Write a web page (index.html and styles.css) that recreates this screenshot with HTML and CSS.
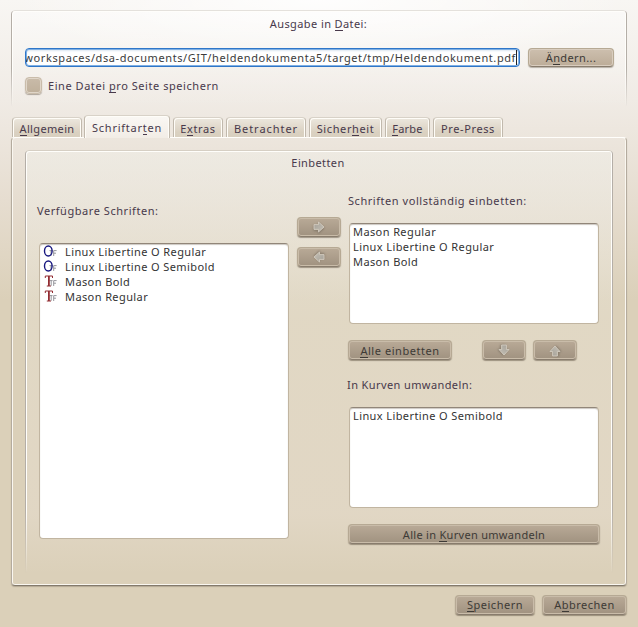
FILE: index.html
```html
<!DOCTYPE html>
<html lang="de">
<head>
<meta charset="utf-8">
<title>Ausgabe in Datei</title>
<link rel="stylesheet" href="styles.css">
</head>
<body>
<svg class="defs" width="0" height="0" aria-hidden="true">
  <linearGradient id="metal" x1="0" y1="0" x2="1" y2="1"><stop offset="0" stop-color="#a39f97"/><stop offset="1" stop-color="#c6c1b6"/></linearGradient>
  <symbol id="arrow" viewBox="0 0 12 12"><path d="M1 3.6H5.5V1L11 6L5.5 11V8.4H1Z" fill="url(#metal)" stroke="#d2ccbf" stroke-width=".9"/></symbol>
  <symbol id="otf" viewBox="0 0 14 13">
    <path d="M6.5 5.6H9.6M8 5.6V10.8M10.7 11V5.6H13.6M10.7 8.2H13" fill="none" stroke="#96969c" stroke-width="1"/>
    <ellipse cx="5.3" cy="6" rx="3.8" ry="5" fill="none" stroke="#16167f" stroke-width="1.4"/>
  </symbol>
  <symbol id="ttf" viewBox="0 0 14 13">
    <path d="M6.5 5.6H9.6M8.2 5.6V10.8M10.7 11V5.6H13.6M10.7 8.2H13" fill="none" stroke="#96969c" stroke-width="1"/>
    <path d="M2.3 3V1H9.5V3M3.8 11H8" fill="none" stroke="#922c32" stroke-width="1"/>
    <path d="M5.9 1V11" fill="none" stroke="#922c32" stroke-width="1.8"/>
  </symbol>
</svg>
<main class="dialog">
  <section class="output">
    <h2 class="heading"><span>Ausgabe in <u>D</u>atei:</span></h2>
    <div class="file-row">
      <div class="file-input"><span class="path">workspaces/dsa-documents/GIT/heldendokumenta5/target/tmp/Heldendokument.pdf</span><i class="caret"></i></div>
      <button class="btn change light"><span>Ä<u>n</u>dern...</span></button>
    </div>
    <label class="check-row"><i class="check"></i><span class="wide">Eine Datei <u>p</u>ro Seite speichern</span></label>
  </section>
  <nav class="tabs">
    <span class="tab t1"><span><u>A</u>llgemein</span></span>
    <span class="tab t2 active"><span>Schriftar<u>t</u>en</span></span>
    <span class="tab t3"><span>E<u>x</u>tras</span></span>
    <span class="tab t4"><span>Betrachter</span></span>
    <span class="tab t5"><span>Sicher<u>h</u>eit</span></span>
    <span class="tab t6"><span><u>F</u>arbe</span></span>
    <span class="tab t7"><span>Pre-Press</span></span>
  </nav>
  <section class="panel">
    <div class="embed">
      <h2 class="heading"><span>Einbetten</span></h2>
      <div class="columns">
        <div class="available">
          <div class="label"><span class="wide">Verfügbare Schriften:</span></div>
          <ul class="list tall">
            <li><svg><use href="#otf"/></svg><span>Linux Libertine O Regular</span></li>
            <li><svg><use href="#otf"/></svg><span>Linux Libertine O Semibold</span></li>
            <li><svg><use href="#ttf"/></svg><span>Mason Bold</span></li>
            <li><svg><use href="#ttf"/></svg><span>Mason Regular</span></li>
          </ul>
        </div>
        <div class="movers">
          <button class="btn arrow" aria-label="Hinzufügen"><svg><use href="#arrow"/></svg></button>
          <button class="btn arrow left" aria-label="Entfernen"><svg><use href="#arrow"/></svg></button>
        </div>
        <div class="targets">
          <div class="label"><span class="wide">Schriften vollständig einbetten:</span></div>
          <ul class="list">
            <li><span>Mason Regular</span></li>
            <li><span>Linux Libertine O Regular</span></li>
            <li><span>Mason Bold</span></li>
          </ul>
          <div class="actions">
            <button class="btn all"><span class="wide"><u>A</u>lle einbetten</span></button>
            <button class="btn arrow down" aria-label="Nach unten"><svg><use href="#arrow"/></svg></button>
            <button class="btn arrow up" aria-label="Nach oben"><svg><use href="#arrow"/></svg></button>
          </div>
          <div class="label second-label"><span>In Kurven umwandeln:</span></div>
          <ul class="list second">
            <li><span>Linux Libertine O Semibold</span></li>
          </ul>
          <button class="btn curves"><span>Alle in <u>K</u>urven umwandeln</span></button>
        </div>
      </div>
    </div>
  </section>
  <footer class="footer">
    <button class="btn save"><span><u>S</u>peichern</span></button>
    <button class="btn cancel"><span>A<u>b</u>brechen</span></button>
  </footer>
</main>
</body>
</html>
```
FILE: styles.css
```css
* { box-sizing: border-box; }
body {
  margin: 0;
  font: 11px/15px "Noto Sans", "Open Sans", sans-serif;
  letter-spacing: .4px;
  color: #48394b;
}
.defs { display: block; height: 0; }
u { text-decoration: none; border-bottom: 1px solid currentColor; display: inline-block; line-height: 12px; }
h2, ul { margin: 0; padding: 0; font: inherit; list-style: none; }
span { white-space: nowrap; }
.wide { letter-spacing: .55px; }
.dialog {
  width: 638px;
  height: 627px;
  padding: 10px 11px 0;
  overflow: hidden;
  background:
    radial-gradient(ellipse 310px 64px at 50% 0, rgba(255,255,255,.85), rgba(255,255,255,0)),
    linear-gradient(#f8f6f3 0, #f0ebe5 100px, #e6ddd0 200px, #dbd0b9 300px);
}
.output, .embed { position: relative; }
.output::before, .embed::before {
  content: "";
  position: absolute;
  inset: 0;
  border: 1px solid #b4aea7;
  border-top-color: #e4e1dc;
  border-radius: 4px;
  box-shadow: inset 1px 1px #fffefb, inset -1px 0 #fffefb;
  pointer-events: none;
}
.output {
  height: 98px;
  padding: 6px 13px 0 14px;
  background: linear-gradient(rgba(255,255,255,.45), rgba(255,255,255,0));
  border-radius: 4px;
}
.output::before { border-bottom: 0; mask-image: linear-gradient(#000 60%, transparent); }
.heading { text-align: center; height: 15px; }
.output .heading { margin-left: -2px; }
.file-row { display: flex; gap: 8px; margin-top: 17px; }
.file-input {
  display: flex;
  justify-content: flex-end;
  width: 495px;
  height: 19px;
  overflow: hidden;
  border: 1px solid #2f76c8;
  border-radius: 4px;
  background: #fff;
  box-shadow: inset 0 0 0 1px #7fb0e4, inset 0 2px 2px #dde7f1;
  color: #3b3b3b;
  padding: 1px 2px;
}
.path { letter-spacing: .59px; }
.caret { width: 1px; height: 15px; background: #222; flex: none; }
.btn {
  height: 20px;
  padding: 0;
  border: 1px solid #b6a994;
  border-bottom-color: #887c6d;
  border-radius: 4px;
  background: linear-gradient(#b9aa97, #a09280);
  box-shadow: inset 0 0 0 1px #c9bca9, 0 1px 1px rgba(90,78,62,.5);
  font: inherit;
  letter-spacing: inherit;
  color: #3d3a36;
  display: flex;
  align-items: center;
  justify-content: center;
}
.light { background: linear-gradient(#cdbfae, #bcac98); box-shadow: inset 0 0 0 1px #d9cdbf, 0 1px 1px rgba(90,78,62,.4); }
.change { width: 86px; height: 19px; }
.check-row { display: flex; align-items: center; gap: 6px; height: 17px; margin-top: 10px; }
.check {
  width: 17px;
  height: 17px;
  border: 1px solid #c9bcaa;
  border-radius: 4px;
  background: linear-gradient(#c9bba9, #bfb09b);
  box-shadow: inset 0 0 0 1px #e0d6c9, 0 1px 1px rgba(90,78,62,.45);
}
.tabs { display: flex; align-items: flex-end; height: 29px; padding-left: 1px; }
.tab {
  height: 20px;
  border: 1px solid #c1b9ad;
  border-top-color: #d8d2c8;
  border-bottom: 0;
  border-radius: 4px 4px 0 0;
  background: linear-gradient(#ece7de, #dad1c1 75%, #d9d0c0);
  box-shadow: inset 1px 1px #fffdf8, inset -1px 0 #fffdf8;
  margin-right: 3px;
  padding-top: 3px;
  text-align: center;
}
.t1 { width: 70px; letter-spacing: .35px; }
.t2 { width: 86px; letter-spacing: .75px; }
.t3 { width: 50px; letter-spacing: .65px; }
.t4 { width: 80px; letter-spacing: .95px; }
.t5 { width: 73px; letter-spacing: .6px; }
.t6 { width: 45px; letter-spacing: .2px; }
.t7 { width: 70px; letter-spacing: .6px; }
.active {
  height: 23px;
  margin-bottom: -1px;
  margin-left: -1px;
  padding-top: 4px;
  background: linear-gradient(#faf8f4, #f2ede6);
  position: relative;
}
.panel {
  height: 449px;
  padding: 12px 13px 0;
  border: 1px solid #b4ab9e;
  border-top-color: #fffefb;
  border-bottom-color: #837a6c;
  border-radius: 4px;
  box-shadow: inset 1px 0 #faf7f0, inset -1px 0 #faf7f0, inset 0 -1px #faf7f0, 0 1px 1px rgba(90,78,62,.3);
}
.embed {
  height: 424px;
  padding: 5px 0 0 11px;
  border-radius: 4px;
  background: linear-gradient(rgba(240,240,234,.5), rgba(240,236,225,.28) 40%, rgba(240,232,225,.28) 86%, transparent);
}
.embed::before { border-top-color: #d6cfc4; border-bottom: 0; mask-image: linear-gradient(#000 85%, transparent); }
.embed .heading { margin-left: -13px; }
.columns { display: grid; grid-template-columns: 261px 51px 252px; }
.available { padding-top: 33px; }
.available .label { padding-left: 1px; }
.label { height: 15px; }
.second-label { margin-left: -1px; }
.list {
  width: 250px;
  height: 101px;
  margin: 15px 0 0 1px;
  padding: 0 3px;
  border: 1px solid #c1b5a1;
  border-top-color: #918679;
  border-radius: 4px;
  background: #fff;
  box-shadow: inset 0 1px 1px #ccc8c2;
  color: #333;
}
.list li { height: 15px; display: flex; align-items: center; gap: 8px; }
.list svg { width: 14px; height: 13px; }
.tall { height: 296px; margin: 25px 0 0 3px; }
.movers { display: flex; flex-direction: column; gap: 10px; padding-top: 47px; }
.arrow { width: 44px; height: 20px; }
.arrow svg { width: 12px; height: 12px; filter: drop-shadow(0 1px 1px rgba(70,62,52,.4)); }
.left svg { transform: rotate(180deg); }
.down svg { transform: rotate(90deg); }
.up svg { transform: translateY(1px) rotate(-90deg); }
.targets { padding-top: 23px; }
.actions { display: flex; margin: 16px 0 17px; }
.all { width: 104px; margin-right: 30px; }
.down { margin-right: 7px; }
.second { margin-top: 15px; }
.curves { width: 252px; margin-top: 16px; letter-spacing: .3px; }
.footer { display: flex; justify-content: flex-end; gap: 7px; margin-top: 9px; }
.footer .btn { padding-bottom: 2px; letter-spacing: .5px; }
.save { width: 80px; }
.cancel { width: 85px; }
```
